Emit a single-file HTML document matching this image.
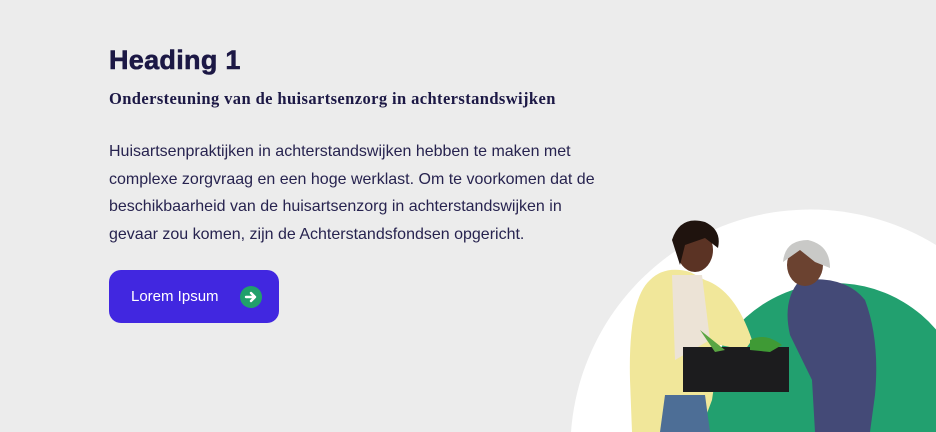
<!DOCTYPE html>
<html style="overflow:hidden;width:936px;height:432px"><head><style>
html,body{margin:0;padding:0}
body{width:936px;height:432px;background:#ececec;overflow:hidden;position:relative;font-family:"Liberation Sans",sans-serif;color:#1c1845}
h1{position:absolute;left:109px;top:44px;margin:0;font-size:27px;line-height:32px;font-weight:bold;letter-spacing:0.3px;-webkit-text-stroke:0.6px #1c1845}
h2{position:absolute;left:109px;top:89px;margin:0;font:bold 16.5px/20px "Liberation Serif",serif;letter-spacing:0.4px;color:#1c1845}
p{position:absolute;left:109px;top:138px;margin:0;width:500px;font-size:16px;line-height:27.5px;color:#27234f}
.btn{position:absolute;left:109px;top:270px;width:170px;height:53px;background:#4127e0;border-radius:12px;color:#fff;font-size:15px}
.btn span{position:absolute;left:22px;top:18px}
.btn i{position:absolute;left:131px;top:16px;width:22px;height:22px;border-radius:50%;background:#21a06b}
</style></head><body>
<h1>Heading 1</h1>
<h2>Ondersteuning van de huisartsenzorg in achterstandswijken</h2>
<p>Huisartsenpraktijken in achterstandswijken hebben te maken met complexe zorgvraag en een hoge werklast. Om te voorkomen dat de beschikbaarheid van de huisartsenzorg in achterstandswijken in gevaar zou komen, zijn de Achterstandsfondsen opgericht.</p>
<div class="btn"><span>Lorem Ipsum</span><i><svg width="22" height="22" viewBox="0 0 22 22"><path d="M6 11h8M11 7l4 4-4 4" stroke="#fff" stroke-width="2.4" fill="none" stroke-linecap="round" stroke-linejoin="round"/></svg></i></div>
<svg style="position:absolute;left:0;top:0;display:block" width="936" height="432">
<path d="M571 432 A240 240 0 0 1 936 245 L936 432Z" fill="#fff"/>
<path d="M703 432 A133 133 0 0 1 936 329.5 L936 432Z" fill="#22a06f"/>
<path d="M650 280 Q665 265 690 272 L705 280 Q735 290 752 340 L745 350 L720 345 L712 400 L700 432 L632 432 L630 380 Q628 300 650 280Z" fill="#f1e79a"/>
<path d="M672 275 L702 275 L710 340 L675 360Z" fill="#ece3d6"/>
<path d="M660 432 L665 395 L705 395 L710 432Z" fill="#4d6e96"/>
<ellipse cx="695" cy="250" rx="18" ry="22" fill="#5b3324"/>
<path d="M672 240 Q680 215 705 222 Q722 230 718 248 L705 238 L685 245 L680 265Z" fill="#1f130e"/>
<path d="M800 280 Q845 275 865 300 Q880 340 875 395 L870 432 L815 432 L812 380 L790 335 Q782 300 800 280Z" fill="#444a77"/>
<ellipse cx="805" cy="265" rx="18" ry="21" fill="#6b4230"/>
<path d="M783 262 Q785 240 808 240 Q830 245 830 268 L815 262 L800 250Z" fill="#c9c9c7"/>
<rect x="683" y="347" width="106" height="45" fill="#1c1c1e"/>
<path d="M750 340 Q765 332 782 345 L770 352 L750 350Z" fill="#3f9a35"/>
<path d="M700 330 L725 350 L715 352Z" fill="#5aa543"/>
</svg>
</body></html>
